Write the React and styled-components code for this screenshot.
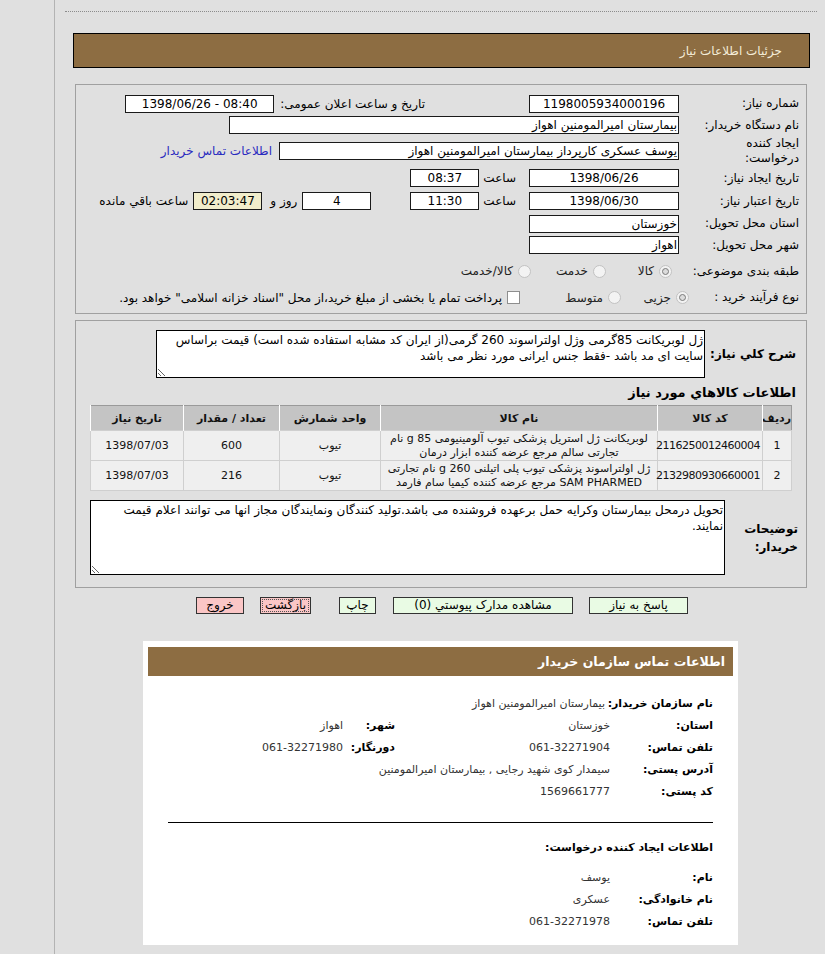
import React from "react";
import styled, { createGlobalStyle } from "styled-components";

const GlobalStyle = createGlobalStyle`
  html, body { margin: 0; padding: 0; }
  body {
    background: #e0e0e0;
    font-family: "DejaVu Sans", Tahoma, sans-serif;
    font-size: 12px;
    color: #000;
  }
`;

const Page = styled.div`
  display: flex;
  min-height: 954px;
`;

const SideRail = styled.div`
  width: 54px;
  flex-shrink: 0;
  border-right: 1px solid #b3b3b3;
`;

const Main = styled.div`
  flex: 1;
  padding: 11px 0 10px;
`;

const DotLine = styled.div`
  margin: 0 8px 0 10px;
  border-top: 1px dotted #8c8c8c;
`;

const TitleBar = styled.div`
  margin: 21px 15px 0 18px;
  height: 33px;
  border: 1px solid #000;
  background: #8d6d42;
  color: #f4ecd8;
  direction: rtl;
  display: flex;
  align-items: center;
  padding-right: 27px;
  font-size: 12px;
`;

const Panel = styled.div`
  margin: ${(p) => p.$top}px 18px 0 20px;
  border: 1px solid #a0a0a0;
  direction: rtl;
  padding: ${(p) => p.$pad};
`;

const FormRow = styled.div`
  display: flex;
  align-items: center;
  height: ${(p) => p.$h}px;
`;

const FieldLabel = styled.div`
  width: ${(p) => p.$w || 120}px;
  flex-shrink: 0;
  line-height: 15px;
  white-space: nowrap;
`;

const Field = styled.div`
  box-sizing: border-box;
  width: ${(p) => p.$w}px;
  height: 18px;
  margin-right: ${(p) => p.$mr || 0}px;
  border: 1px solid #1a1a1a;
  background: ${(p) => p.$bg || "#fff"};
  text-align: ${(p) => (p.$center ? "center" : "right")};
  direction: ${(p) => (p.$ltr ? "ltr" : "rtl")};
  padding: 0 1px;
  line-height: 16px;
  white-space: nowrap;
  overflow: hidden;
  flex-shrink: 0;
`;

const Note = styled.span`
  margin-right: ${(p) => p.$mr || 0}px;
  white-space: nowrap;
  color: ${(p) => p.$color || "#000"};
`;

const Choice = styled.div`
  display: flex;
  align-items: center;
  gap: 5px;
  width: ${(p) => (p.$w ? `${p.$w}px` : "auto")};
  margin-right: ${(p) => p.$mr || 0}px;
  flex-shrink: 0;
  color: #222;
`;

const RadioDot = styled.span`
  box-sizing: border-box;
  width: 13px;
  height: 13px;
  border-radius: 50%;
  border: 1px solid #c2c2c2;
  background: #f3f3f3;
  position: relative;
  flex-shrink: 0;
  &::after {
    content: "";
    display: ${(p) => (p.$on ? "block" : "none")};
    position: absolute;
    inset: 2px;
    border-radius: 50%;
    border: 1px solid #7a7a7a;
    background: #dcdcdc;
  }
`;

const CheckBox = styled.span`
  box-sizing: border-box;
  width: 13px;
  height: 13px;
  border: 1px solid #8e8e8e;
  background: #fff;
  flex-shrink: 0;
`;

const AreaRow = styled.div`
  display: flex;
  align-items: center;
  padding-right: ${(p) => p.$pr}px;
  margin-top: ${(p) => p.$mt}px;
`;

const AreaLabel = styled.div`
  width: ${(p) => p.$w}px;
  flex-shrink: 0;
  font-weight: bold;
  font-size: 12px;
  line-height: 18px;
`;

const TextArea = styled.textarea`
  box-sizing: border-box;
  width: ${(p) => p.$w}px;
  height: ${(p) => p.$h}px;
  border: 1px solid #000;
  background: #fff;
  font-family: "DejaVu Sans", Tahoma, sans-serif;
  font-size: 12px;
  line-height: 16px;
  padding: 1px 1px;
  direction: rtl;
  overflow: hidden;
  outline: none;
  color: #000;
`;

const SectionTitle = styled.div`
  font-weight: bold;
  font-size: 13px;
  line-height: 15px;
  margin: 7px 10px 0 0;
`;

const ItemsTable = styled.table`
  width: 702px;
  table-layout: fixed;
  margin: 5px 14px 0 0;
  border-collapse: collapse;
  border: 1px solid #9a9a9a;
  font-size: 11px;
`;

const Th = styled.th`
  width: ${(p) => (p.$w ? `${p.$w}px` : "auto")};
  height: 24px;
  background: #c4c4c4;
  border-left: 1px solid #fff;
  font-weight: bold;
  font-size: 11px;
  color: #111;
  padding: 0;
  white-space: nowrap;
  overflow: hidden;
`;

const Td = styled.td`
  height: 29px;
  background: #efefef;
  border: 1px solid #cfcfcf;
  text-align: center;
  padding: 0 2px;
  line-height: 14px;
  color: #111;
  letter-spacing: ${(p) => (p.$tight ? "-0.5px" : "normal")};
  white-space: ${(p) => (p.$tight ? "nowrap" : "normal")};
`;

const ButtonBar = styled.div`
  direction: rtl;
  display: flex;
  margin-top: 9px;
  padding-right: 137px;
`;

const Btn = styled.button`
  box-sizing: border-box;
  height: 17px;
  width: ${(p) => p.$w}px;
  margin-right: ${(p) => p.$mr || 0}px;
  border: 1px solid #333;
  background: ${(p) => (p.$tone === "red" ? "#fbc6c6" : "#e9fbe4")};
  font-family: "DejaVu Sans", Tahoma, sans-serif;
  font-size: 12px;
  line-height: 15px;
  padding: 0;
  color: #000;
  outline: ${(p) => (p.$focus ? "1px dotted #555" : "none")};
  outline-offset: -3px;
`;

const Card = styled.div`
  box-sizing: border-box;
  width: 595px;
  margin: 27px 0 0 88px;
  background: #fff;
  padding: 6px 5px 13px;
  direction: rtl;
`;

const CardHeader = styled.div`
  height: 29px;
  background: #8d6d42;
  color: #fff;
  font-weight: bold;
  font-size: 12.5px;
  display: flex;
  align-items: center;
  padding-right: 8px;
`;

const CardBody = styled.div`
  padding: 16px 20px 0;
`;

const InfoRow = styled.div`
  display: flex;
  align-items: center;
  height: 22px;
`;

const InfoLabel = styled.div`
  width: ${(p) => p.$w}px;
  flex-shrink: 0;
  font-weight: bold;
  font-size: 11px;
  white-space: nowrap;
`;

const InfoValue = styled.div`
  width: ${(p) => (p.$w ? `${p.$w}px` : "auto")};
  margin-right: ${(p) => p.$mr || 0}px;
  flex-shrink: 0;
  font-size: 11px;
  color: #333;
  white-space: nowrap;
`;

const Rule = styled.div`
  margin-top: 20px;
  border-top: 1px solid #000;
`;

const SubTitle = styled.div`
  margin: 17px 0 11px;
  font-weight: bold;
  font-size: 11px;
  line-height: 15px;
`;

const items = [
  {
    row: "1",
    code: "2116250012460004",
    name: "لوبریکانت ژل استریل پزشکی تیوب آلومینیومی 85 g نام تجارتی سالم مرجع عرضه کننده ابزار درمان",
    unit: "تیوب",
    qty: "600",
    date: "1398/07/03",
  },
  {
    row: "2",
    code: "2132980930660001",
    name: "ژل اولتراسوند پزشکی تیوب پلی اتیلنی 260 g نام تجارتی SAM PHARMED مرجع عرضه کننده کیمیا سام فارمد",
    unit: "تیوب",
    qty: "216",
    date: "1398/07/03",
  },
];

const App = () => {
  return (
    <>
      <GlobalStyle />
      <Page>
        <SideRail />
        <Main>
          <DotLine />
          <TitleBar>جزئیات اطلاعات نیاز</TitleBar>

          <Panel $top={16} $pad="8px 7px 5px 0">
            <FormRow $h={21}>
              <FieldLabel>شماره نیاز:</FieldLabel>
              <Field $w={150} $center $ltr>1198005934000196</Field>
              <Note $mr={104}>تاریخ و ساعت اعلان عمومی:</Note>
              <Field $w={149} $mr={6} $center $ltr>1398/06/26 - 08:40</Field>
            </FormRow>
            <FormRow $h={22}>
              <FieldLabel>نام دستگاه خریدار:</FieldLabel>
              <Field $w={450}>بیمارستان امیرالمومنین اهواز</Field>
            </FormRow>
            <FormRow $h={30}>
              <FieldLabel>
                ایجاد کننده
                <br />
                درخواست:
              </FieldLabel>
              <Field $w={400}>یوسف عسکری کارپرداز بیمارستان امیرالمومنین اهواز</Field>
              <Note $mr={7} $color="#2a2abf">اطلاعات تماس خریدار</Note>
            </FormRow>
            <FormRow $h={24}>
              <FieldLabel>تاریخ ایجاد نیاز:</FieldLabel>
              <Field $w={150} $center $ltr>1398/06/26</Field>
              <Note $mr={13}>ساعت</Note>
              <Field $w={69} $mr={4} $center $ltr>08:37</Field>
            </FormRow>
            <FormRow $h={22}>
              <FieldLabel>تاریخ اعتبار نیاز:</FieldLabel>
              <Field $w={150} $center $ltr>1398/06/30</Field>
              <Note $mr={13}>ساعت</Note>
              <Field $w={69} $mr={4} $center $ltr>11:30</Field>
              <Field $w={69} $mr={39} $center>4</Field>
              <Note $mr={5}>روز و</Note>
              <Field $w={69} $mr={8} $center $ltr $bg="#f1edcb">02:03:47</Field>
              <Note $mr={5}>ساعت باقي مانده</Note>
            </FormRow>
            <FormRow $h={23}>
              <FieldLabel>استان محل تحویل:</FieldLabel>
              <Field $w={150}>خوزستان</Field>
            </FormRow>
            <FormRow $h={20}>
              <FieldLabel>شهر محل تحویل:</FieldLabel>
              <Field $w={150}>اهواز</Field>
            </FormRow>
            <FormRow $h={32}>
              <FieldLabel>طبقه بندی موضوعی:</FieldLabel>
              <Choice $w={66} $mr={7}>
                <RadioDot $on />
                کالا
              </Choice>
              <Choice $w={75}>
                <RadioDot />
                خدمت
              </Choice>
              <Choice>
                <RadioDot />
                کالا/خدمت
              </Choice>
            </FormRow>
            <FormRow $h={21}>
              <FieldLabel $w={110}>نوع فرآیند خرید :</FieldLabel>
              <Choice $w={68}>
                <RadioDot $on />
                جزیی
              </Choice>
              <Choice $w={101}>
                <RadioDot />
                متوسط
              </Choice>
              <CheckBox />
              <Note $mr={5}>
                پرداخت تمام یا بخشی از مبلغ خرید،از محل "اسناد خزانه اسلامی" خواهد بود.
              </Note>
            </FormRow>
          </Panel>

          <Panel $top={6} $pad="0 0 12px 0">
            <AreaRow $pr={10} $mt={9}>
              <AreaLabel $w={91}>شرح کلي نياز:</AreaLabel>
              <TextArea
                $w={549}
                $h={48}
                readOnly
                value="ژل لوبریکانت 85گرمی وژل اولتراسوند 260 گرمی(از ایران کد مشابه استفاده شده است) قیمت براساس سایت ای مد باشد -فقط جنس ایرانی مورد نظر می باشد"
              />
            </AreaRow>
            <SectionTitle>اطلاعات كالاهاي مورد نياز</SectionTitle>
            <ItemsTable>
              <thead>
                <tr>
                  <Th $w={28}>ردیف</Th>
                  <Th $w={104}>کد کالا</Th>
                  <Th $w={276}>نام کالا</Th>
                  <Th $w={100}>واحد شمارش</Th>
                  <Th $w={95}>تعداد / مقدار</Th>
                  <Th>تاریخ نیاز</Th>
                </tr>
              </thead>
              <tbody>
                {items.map((it) => (
                  <tr key={it.row}>
                    <Td>{it.row}</Td>
                    <Td $tight>{it.code}</Td>
                    <Td>{it.name}</Td>
                    <Td>{it.unit}</Td>
                    <Td>{it.qty}</Td>
                    <Td>{it.date}</Td>
                  </tr>
                ))}
              </tbody>
            </ItemsTable>
            <AreaRow $pr={8} $mt={9}>
              <AreaLabel $w={73}>
                توضیحات
                <br />
                خریدار:
              </AreaLabel>
              <TextArea
                $w={635}
                $h={75}
                readOnly
                value="تحویل درمحل بیمارستان وکرایه حمل برعهده فروشنده می باشد.تولید کنندگان ونمایندگان مجاز انها می توانند اعلام قیمت نمایند."
              />
            </AreaRow>
          </Panel>

          <ButtonBar>
            <Btn $w={99}>پاسخ به نیاز</Btn>
            <Btn $w={180} $mr={16}>مشاهده مدارک پیوستي (0)</Btn>
            <Btn $w={37} $mr={17}>چاپ</Btn>
            <Btn $w={51} $mr={28} $tone="red" $focus>بازگشت</Btn>
            <Btn $w={48} $mr={16} $tone="red">خروج</Btn>
          </ButtonBar>

          <Card>
            <CardHeader>اطلاعات تماس سازمان خریدار</CardHeader>
            <CardBody>
              <InfoRow>
                <InfoLabel $w={103}>نام سازمان خریدار:</InfoLabel>
                <InfoValue $mr={5}>بیمارستان امیرالمومنین اهواز</InfoValue>
              </InfoRow>
              <InfoRow>
                <InfoLabel $w={103}>استان:</InfoLabel>
                <InfoValue $w={215}>خوزستان</InfoValue>
                <InfoLabel $w={52}>شهر:</InfoLabel>
                <InfoValue>اهواز</InfoValue>
              </InfoRow>
              <InfoRow>
                <InfoLabel $w={103}>تلفن تماس:</InfoLabel>
                <InfoValue $w={215}>061-32271904</InfoValue>
                <InfoLabel $w={52}>دورنگار:</InfoLabel>
                <InfoValue>061-32271980</InfoValue>
              </InfoRow>
              <InfoRow>
                <InfoLabel $w={103}>آدرس پستی:</InfoLabel>
                <InfoValue>سیمدار کوی شهید رجایی , بیمارستان امیرالمومنین</InfoValue>
              </InfoRow>
              <InfoRow>
                <InfoLabel $w={103}>کد پستی:</InfoLabel>
                <InfoValue>1569661777</InfoValue>
              </InfoRow>
              <Rule />
              <SubTitle>اطلاعات ایجاد کننده درخواست:</SubTitle>
              <InfoRow>
                <InfoLabel $w={103}>نام:</InfoLabel>
                <InfoValue>یوسف</InfoValue>
              </InfoRow>
              <InfoRow>
                <InfoLabel $w={103}>نام خانوادگی:</InfoLabel>
                <InfoValue>عسکری</InfoValue>
              </InfoRow>
              <InfoRow>
                <InfoLabel $w={103}>تلفن تماس:</InfoLabel>
                <InfoValue>061-32271978</InfoValue>
              </InfoRow>
            </CardBody>
          </Card>
        </Main>
      </Page>
    </>
  );
};

export default App;
